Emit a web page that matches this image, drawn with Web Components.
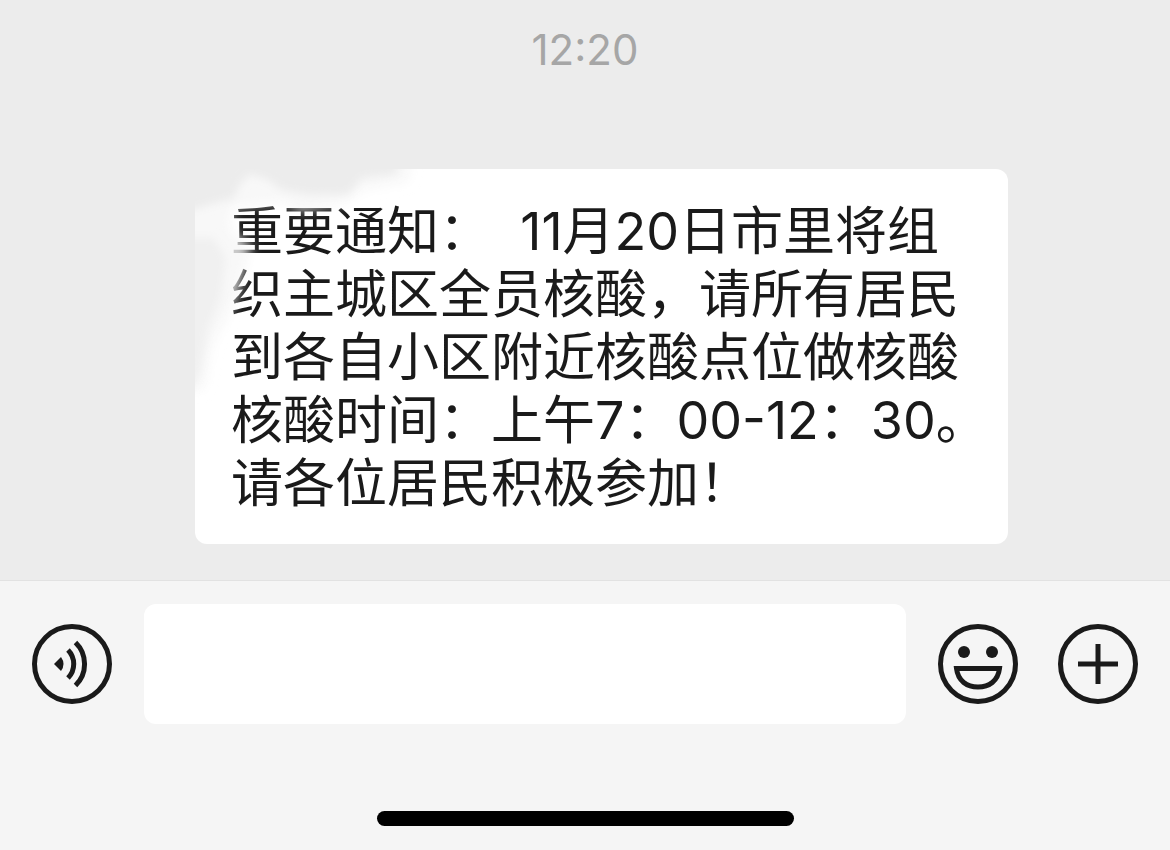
<!DOCTYPE html>
<html lang="zh-CN">
<head>
<meta charset="utf-8">
<meta name="viewport" content="width=device-width, initial-scale=1">
<title>聊天</title>
<style>
  body { margin: 0; background: #f5f5f5; color: #1a1a1a; font-family: Inter, "Noto Sans CJK SC", sans-serif; }
</style>
</head>
<body>
<chat-screen>
  <chat-time slot="messages">12:20</chat-time>
  <chat-bubble slot="messages">重要通知：&nbsp; 11月20日市里将组<br>织主城区全员核酸，请所有居民<br>到各自小区附近核酸点位做核酸<br>核酸时间：上午7：00-12：30。<br>请各位居民积极参加！</chat-bubble>
  <chat-composer slot="footer"></chat-composer>
  <home-indicator slot="footer"></home-indicator>
</chat-screen>
<script>
class BaseElement extends HTMLElement {
  constructor() {
    super();
    this.attachShadow({ mode: "open" }).innerHTML = this.constructor.markup;
  }
}

customElements.define("chat-screen", class extends BaseElement {
  static markup = `
    <style>
      :host { display: flex; flex-direction: column; min-height: 100vh; }
      main { flex: 1; background: #ececec; padding-bottom: 36px; }
      footer { background: #f5f5f5; border-top: 1px solid #e2e2e2; }
    </style>
    <main><slot name="messages"></slot></main>
    <footer><slot name="footer"></slot></footer>`;
});

customElements.define("chat-time", class extends BaseElement {
  static markup = `
    <style>
      :host { display: block; padding: 24px 0 93px; text-align: center; font-size: 42px; line-height: 52px; color: #a6a6a6; }
    </style>
    <time><slot></slot></time>`;
});

customElements.define("chat-bubble", class extends BaseElement {
  static markup = `
    <style>
      :host { display: block; position: relative; margin: 0 162px 0 195px; padding: 31px 12px 29px 36px; border-radius: 12px;
        background: #fff; font-size: 52px; line-height: 63px; }
      p { margin: 0; }
      svg { position: absolute; left: 0; top: 0; pointer-events: none; }
    </style>
    <p><slot></slot></p>
    <svg width="240" height="240" viewBox="195 169 240 240" aria-hidden="true">
      <defs>
        <filter id="soft" x="-20%" y="-20%" width="140%" height="140%"><feGaussianBlur stdDeviation="4"/></filter>
        <filter id="wide" x="-30%" y="-30%" width="160%" height="160%"><feGaussianBlur stdDeviation="6"/></filter>
      </defs>
      <path filter="url(#wide)" fill="#f6f6f6" fill-opacity=".8" d="M170 130H416L408 182 362 190 348 202 300 211 285 202 252 205 232 208 230 230 252 246 246 262 238 294 228 316 212 345 204 390H170Z"/>
      <path filter="url(#soft)" fill="#ececec" d="M160 130H402L396 174 362 178 348 194 310 195 282 190 268 180 250 174 240 184 234 198 212 204 196 209 160 212Z"/>
      <path filter="url(#soft)" fill="#f0f0f0" d="M160 238L214 238 226 258 220 300 208 328 200 372 192 388 160 390Z"/>
    </svg>`;
});

customElements.define("icon-button", class extends BaseElement {
  static icons = {
    voice: `<path fill="currentColor" stroke="none" d="M22 40 29 33Q34 40 29 47Z"/>
      <path d="M36 26A20 20 0 0 1 36 54M43.500 18.500A30 30 0 0 1 43.500 61.500"/>`,
    smile: `<g fill="currentColor" stroke="none"><circle cx="26" cy="28" r="6"/><circle cx="54" cy="28" r="6"/></g>
      <path d="M18.500 44.500H61.500C60 57 51 63 40 63S20 57 18.500 44.500Z"/>`,
    plus: `<path d="M40 20V60M20 40H60"/>`
  };
  static markup = `
    <style>
      :host { display: block; }
      button { display: block; width: 80px; height: 80px; padding: 0; border: 0; border-radius: 50%; background: none; color: #1a1a1a; cursor: pointer; }
      svg { display: block; fill: none; stroke: currentColor; stroke-width: 5; }
    </style>
    <button type="button"><svg width="80" height="80" viewBox="0 0 80 80" aria-hidden="true"></svg></button>`;
  connectedCallback() {
    this.shadowRoot.querySelector("button").setAttribute("aria-label", this.getAttribute("label"));
    this.shadowRoot.querySelector("svg").innerHTML =
      `<circle cx="40" cy="40" r="37.500"/>` + this.constructor.icons[this.getAttribute("icon")];
  }
});

customElements.define("chat-composer", class extends BaseElement {
  static markup = `
    <style>
      :host { display: flex; align-items: center; gap: 32px; padding: 23px 32px; }
      input { flex: 1; min-width: 0; height: 120px; box-sizing: border-box; border: 0; border-radius: 12px; padding: 0 32px;
        background: #fff; color: inherit; font: inherit; font-size: 52px; outline: none; }
      .actions { display: flex; gap: 40px; }
    </style>
    <icon-button icon="voice" label="语音"></icon-button>
    <input type="text" aria-label="消息">
    <div class="actions">
      <icon-button icon="smile" label="表情"></icon-button>
      <icon-button icon="plus" label="更多"></icon-button>
    </div>`;
});

customElements.define("home-indicator", class extends BaseElement {
  static markup = `
    <style>
      :host { display: flex; justify-content: center; padding: 64px 0 24px; }
      div { width: 417px; height: 15px; border-radius: 8px; background: #000; }
    </style>
    <div></div>`;
});
</script>
</body>
</html>
